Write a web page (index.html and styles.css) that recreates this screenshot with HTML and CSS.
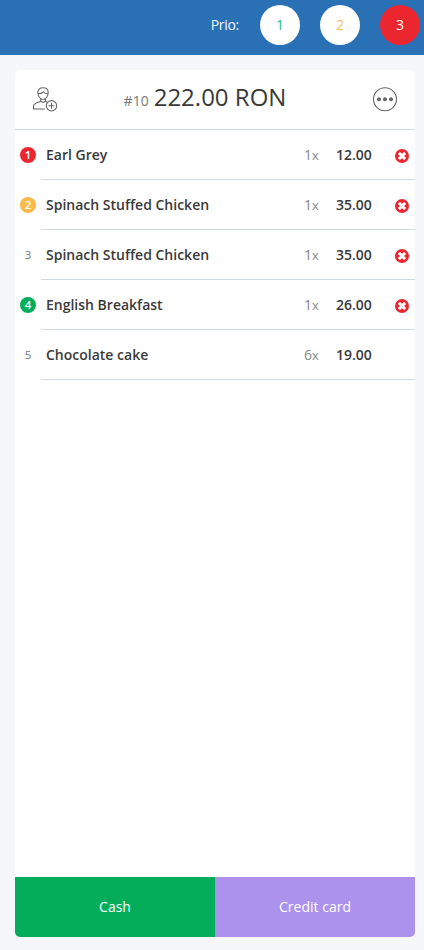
FILE: index.html
```html
<!DOCTYPE html>
<html lang="en">
<head>
<meta charset="utf-8">
<title>Order</title>
<link rel="stylesheet" href="styles.css">
</head>
<body>
<header class="topbar">
  <span class="prio-label">Prio:</span>
  <button class="prio green">1</button>
  <button class="prio amber">2</button>
  <button class="prio active">3</button>
</header>
<main class="card">
  <div class="head">
    <svg class="user" width="26" height="26" viewBox="0 0 26 26" fill="none" stroke="#666" stroke-width="1.100"><path d="M5.800 6.500C5.800 3.500 8 1.800 11 1.800S16.200 3.500 16.200 6.500C16.200 10 14 13.300 11 13.300S5.800 10 5.800 6.500ZM5.800 7.700C8 7.700 10 7.300 11.300 6C12.500 7.300 14 7.700 16.200 7.700M8.700 12.500V15.200C7 16.500 1.500 17 1.500 20V23H12.800M13.400 12.500V15.200L15.200 16.200M8.700 15.200C10 16.500 12 16.500 13.400 15.200"/><circle cx="19.500" cy="19.800" r="5.200"/><path d="M19.500 16.800V22.800M16.500 19.800H22.500"/></svg>
    <h1 class="total"><span class="num">#10</span><span>222.00 RON</span></h1>
    <svg class="more" width="26" height="26" viewBox="0 0 26 26"><circle cx="13" cy="13.300" r="11.500" fill="none" stroke="#666" stroke-width="1.100"/><g fill="#666"><circle cx="7" cy="13.300" r="2"/><circle cx="13" cy="13.300" r="2"/><circle cx="19" cy="13.300" r="2"/></g></svg>
  </div>
  <ul class="items">
    <li><span class="badge red">1</span><div class="line"><span class="name">Earl Grey</span><span class="qty">1<small>x</small></span><span class="price">12.00</span><svg class="del" viewBox="0 0 14 14"><circle cx="7" cy="7" r="7"/><path d="M3.900 3.900L10.100 10.100M10.100 3.900L3.900 10.100"/></svg></div></li>
    <li><span class="badge yellow">2</span><div class="line"><span class="name">Spinach Stuffed Chicken</span><span class="qty">1<small>x</small></span><span class="price">35.00</span><svg class="del" viewBox="0 0 14 14"><circle cx="7" cy="7" r="7"/><path d="M3.900 3.900L10.100 10.100M10.100 3.900L3.900 10.100"/></svg></div></li>
    <li><span class="badge">3</span><div class="line"><span class="name">Spinach Stuffed Chicken</span><span class="qty">1<small>x</small></span><span class="price">35.00</span><svg class="del" viewBox="0 0 14 14"><circle cx="7" cy="7" r="7"/><path d="M3.900 3.900L10.100 10.100M10.100 3.900L3.900 10.100"/></svg></div></li>
    <li><span class="badge emerald">4</span><div class="line"><span class="name">English Breakfast</span><span class="qty">1<small>x</small></span><span class="price">26.00</span><svg class="del" viewBox="0 0 14 14"><circle cx="7" cy="7" r="7"/><path d="M3.900 3.900L10.100 10.100M10.100 3.900L3.900 10.100"/></svg></div></li>
    <li><span class="badge">5</span><div class="line"><span class="name">Chocolate cake</span><span class="qty">6<small>x</small></span><span class="price">19.00</span></div></li>
  </ul>
  <footer class="pay"><button class="cash">Cash</button><button class="credit">Credit card</button></footer>
</main>
</body>
</html>
```
FILE: styles.css
```css
* { box-sizing: border-box; }
body { margin: 0; height: 950px; background: #f5f7fb; font: 14px/20px "Open Sans", sans-serif; color: #3a3a3a; display: flex; flex-direction: column; }
button { border: 0; padding: 0; font: inherit; color: #fff; }
.topbar { height: 55px; padding: 5px 4px 10px 0; background: #2a70b5; display: flex; justify-content: flex-end; align-items: center; gap: 20px; }
.prio-label { color: #f4f8fc; letter-spacing: -0.3px; margin-right: 1px; }
.prio { width: 40px; height: 40px; border-radius: 50%; background: #fff; }
.green { color: #2dbb77; }
.amber { color: #fbc056; }
.active { background: #eb262f; color: #fff; }
.card { margin: 15px 9px 13px 15px; flex: 1; background: #fff; border-radius: 5px; overflow: hidden; display: flex; flex-direction: column; }
.head { height: 60px; border-bottom: 1px solid #d1dade; padding: 0 17px; display: flex; align-items: center; }
.user, .more { flex: none; margin-bottom: 1px; }
.total { flex: 1; display: flex; justify-content: center; align-items: baseline; gap: 5px; margin: 0; font-size: 24px; line-height: 30px; font-weight: 400; padding: 0 20px 1px 0; }
.num { font-size: 14px; color: #777; }
.items { list-style: none; margin: 0; padding: 0; flex: 1; }
.items li { height: 50px; display: flex; align-items: center; padding-left: 5px; }
.badge { width: 16px; height: 16px; border-radius: 50%; font-size: 11.500px; line-height: 16px; text-align: center; color: #777; margin-right: 5px; }
.red, .yellow, .emerald { color: #fff; font-weight: 600; }
.red { background: #eb262f; }
.yellow { background: #f8b94a; }
.emerald { background: #04ad59; }
.line { flex: 1; height: 50px; border-bottom: 1px solid #d1dade; display: grid; grid-template-columns: 258px 32px 59px 14px; padding-left: 5px; align-items: center; font-weight: 600; }
.qty { font-weight: 400; color: #888; }
.qty small { font-size: 13px; }
.del { width: 14px; height: 14px; margin-top: 2px; fill: #eb262f; }
.del path { stroke: #fff; stroke-width: 2.900; }
.pay { display: flex; height: 60px; }
.pay button { flex: 1; }
.cash { background: #04ad59; }
.credit { background: #ac92ec; }
```
